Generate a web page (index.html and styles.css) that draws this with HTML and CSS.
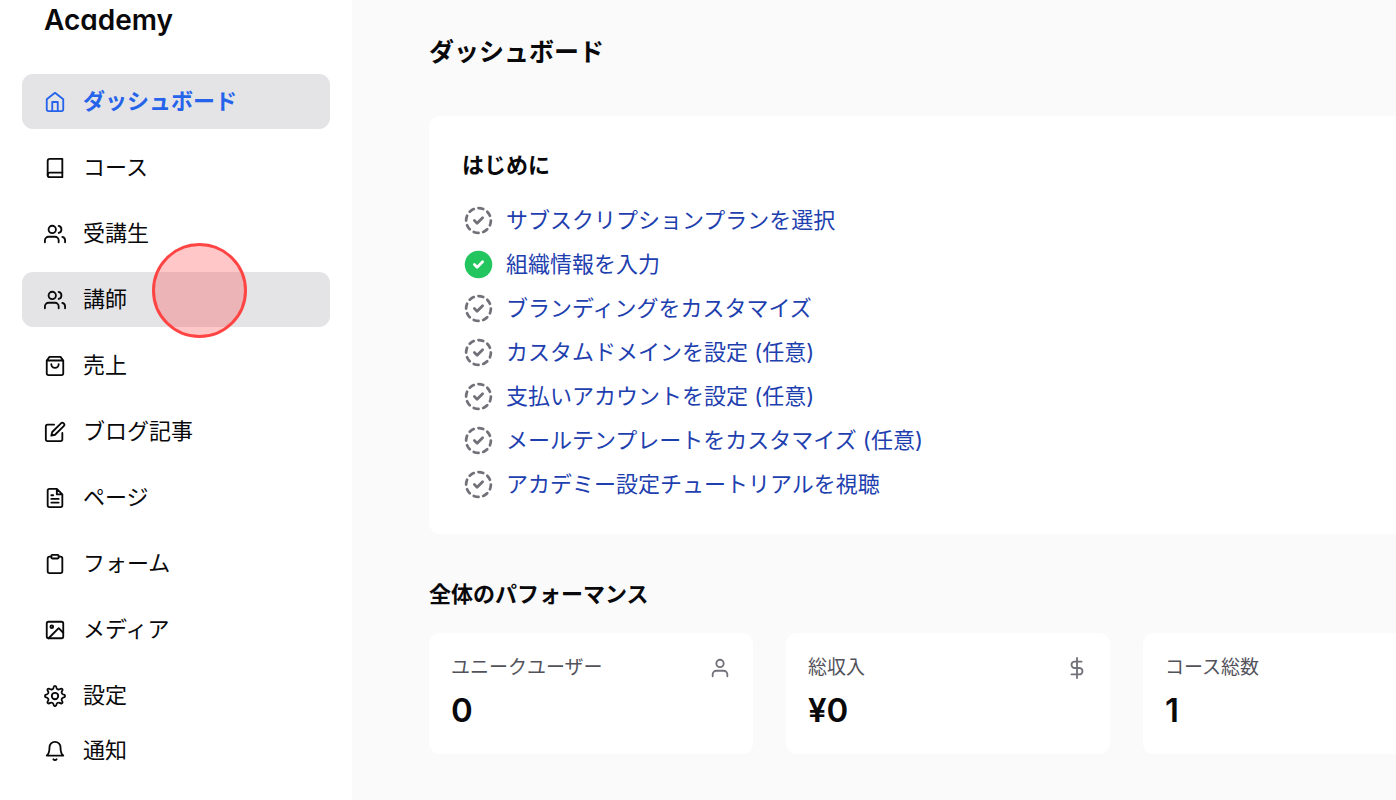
FILE: index.html
```html
<!DOCTYPE html>
<html lang="ja">
<head>
    <meta charset="UTF-8">
    <meta name="viewport" content="width=device-width, initial-scale=1.0">
    <title>ダッシュボード | Academy</title>
    <link rel="stylesheet" href="styles.css">
</head>
<body>
    <!-- shared icons -->
    <svg class="sprite" aria-hidden="true">
        <symbol id="icon-todo" viewBox="0 0 24 24">
            <path d="M8.56 3.69a9 9 0 0 0 -2.92 1.95M3.69 8.56a9 9 0 0 0 -.69 3.44M3.69 15.44a9 9 0 0 0 1.95 2.92M8.56 20.31a9 9 0 0 0 3.44 .69M15.44 20.31a9 9 0 0 0 2.92 -1.95M20.31 15.44a9 9 0 0 0 .69 -3.44M20.31 8.56a9 9 0 0 0 -1.95 -2.92M15.44 3.69a9 9 0 0 0 -3.44 -.69M9 12l2 2l4 -4"/>
        </symbol>
        <symbol id="icon-done" viewBox="0 0 24 24">
            <circle cx="12" cy="12" r="10" fill="#22c55e" stroke="none"/>
            <path d="M9 12l2 2l4 -4" stroke="#fff"/>
        </symbol>
        <symbol id="icon-users" viewBox="0 0 24 24">
            <path d="M16 21v-2a4 4 0 0 0-4-4H5a4 4 0 0 0-4 4v2M23 21v-2a4 4 0 0 0-3-3.87M16 3.13a4 4 0 0 1 0 7.75"/>
            <circle cx="9" cy="7" r="4"/>
        </symbol>
    </svg>

    <div class="layout">
        <aside class="sidebar">
            <div class="brand">Academy</div>
            <nav class="nav">
                <a class="nav-item active" href="#">
                    <svg class="icon" viewBox="0 0 24 24"><path d="M3 9l9-7 9 7v11a2 2 0 0 1-2 2H5a2 2 0 0 1-2-2z"/><path d="M9 22V12h6v10"/></svg>
                    ダッシュボード
                </a>
                <a class="nav-item" href="#">
                    <svg class="icon" viewBox="0 0 24 24"><path d="M4 19.5A2.5 2.5 0 0 1 6.500 17H20"/><path d="M6.500 2H20v20H6.500A2.500 2.500 0 0 1 4 19.500v-15A2.500 2.500 0 0 1 6.500 2z"/></svg>
                    コース
                </a>
                <a class="nav-item" href="#">
                    <svg class="icon"><use href="#icon-users"/></svg>
                    受講生
                </a>
                <a class="nav-item hovered" href="#">
                    <svg class="icon"><use href="#icon-users"/></svg>
                    講師
                    <span class="click-marker"></span>
                </a>
                <a class="nav-item" href="#">
                    <svg class="icon" viewBox="0 0 24 24"><path d="M6 2L3 6v14a2 2 0 0 0 2 2h14a2 2 0 0 0 2-2V6l-3-4zM3 6h18M16 10a4 4 0 0 1-8 0"/></svg>
                    売上
                </a>
                <a class="nav-item" href="#">
                    <svg class="icon" viewBox="0 0 24 24"><path d="M11 4H4a2 2 0 0 0-2 2v14a2 2 0 0 0 2 2h14a2 2 0 0 0 2-2v-7"/><path d="M18.5 2.5a2.121 2.121 0 0 1 3 3L12 15l-4 1 1-4z"/></svg>
                    ブログ記事
                </a>
                <a class="nav-item" href="#">
                    <svg class="icon" viewBox="0 0 24 24"><path d="M14 2H6a2 2 0 0 0-2 2v16a2 2 0 0 0 2 2h12a2 2 0 0 0 2-2V8zM14 2v6h6M16 13H8M16 17H8M10 9H8"/></svg>
                    ページ
                </a>
                <a class="nav-item" href="#">
                    <svg class="icon" viewBox="0 0 24 24"><path d="M16 4h2a2 2 0 0 1 2 2v14a2 2 0 0 1-2 2H6a2 2 0 0 1-2-2V6a2 2 0 0 1 2-2h2"/><rect x="8" y="2" width="8" height="4" rx="1"/></svg>
                    フォーム
                </a>
                <a class="nav-item" href="#">
                    <svg class="icon" viewBox="0 0 24 24"><rect x="3" y="3" width="18" height="18" rx="2"/><circle cx="8.5" cy="8.5" r="1.5"/><path d="M21 15l-5-5L5 21"/></svg>
                    メディア
                </a>
            </nav>
            <div class="nav-footer">
                <a class="nav-item" href="#">
                    <svg class="icon" viewBox="0 0 24 24"><circle cx="12" cy="12" r="3.5"/><path d="M10.3 3.2c.4-2.900 3-2.900 3.400 0a2.300 2.300 0 0 0 3.400 1.400c2.400-1.600 4.100.1 2.400 2.400a2.300 2.300 0 0 0 1.400 3.300c2.800.5 2.800 3 0 3.500a2.300 2.300 0 0 0-1.400 3.300c1.700 2.300 0 4-2.400 2.400a2.300 2.300 0 0 0-3.400 1.400c-.4 2.900-3 2.900-3.400 0a2.300 2.300 0 0 0-3.400-1.400c-2.400 1.600-4.100-.1-2.400-2.400a2.300 2.300 0 0 0-1.400-3.300c-2.800-.5-2.800-3 0-3.500A2.300 2.300 0 0 0 4.500 7c-1.700-2.300 0-4 2.400-2.400a2.300 2.300 0 0 0 3.400-1.400z"/></svg>
                    設定
                </a>
                <a class="nav-item" href="#">
                    <svg class="icon" viewBox="0 0 24 24"><path d="M18 8A6 6 0 0 0 6 8c0 7-3 9-3 9h18s-3-2-3-9M13.73 21a2 2 0 0 1-3.46 0"/></svg>
                    通知
                </a>
            </div>
        </aside>

        <main class="main">
            <div class="content">
                <h1 class="page-title">ダッシュボード</h1>

                <section class="card setup">
                    <h2 class="section-title">はじめに</h2>
                    <ul class="setup-list">
                        <li><svg class="step-icon"><use href="#icon-todo"/></svg><a href="#">サブスクリプションプランを選択</a></li>
                        <li><svg class="step-icon"><use href="#icon-done"/></svg><a href="#">組織情報を入力</a></li>
                        <li><svg class="step-icon"><use href="#icon-todo"/></svg><a href="#">ブランディングをカスタマイズ</a></li>
                        <li><svg class="step-icon"><use href="#icon-todo"/></svg><a href="#">カスタムドメインを設定 (任意)</a></li>
                        <li><svg class="step-icon"><use href="#icon-todo"/></svg><a href="#">支払いアカウントを設定 (任意)</a></li>
                        <li><svg class="step-icon"><use href="#icon-todo"/></svg><a href="#">メールテンプレートをカスタマイズ (任意)</a></li>
                        <li><svg class="step-icon"><use href="#icon-todo"/></svg><a href="#">アカデミー設定チュートリアルを視聴</a></li>
                    </ul>
                </section>

                <h2 class="section-title">全体のパフォーマンス</h2>
                <div class="stats">
                    <div class="card stat">
                        <div class="stat-head">
                            <span>ユニークユーザー</span>
                            <svg class="icon" viewBox="0 0 24 24"><path d="M20 21v-2a4 4 0 0 0-4-4H8a4 4 0 0 0-4 4v2"/><circle cx="12" cy="7" r="4"/></svg>
                        </div>
                        <div class="stat-value">0</div>
                    </div>
                    <div class="card stat">
                        <div class="stat-head">
                            <span>総収入</span>
                            <svg class="icon" viewBox="0 0 24 24"><path d="M12 1v22M17 5H9.5a3.5 3.5 0 0 0 0 7h5a3.5 3.5 0 0 1 0 7H6"/></svg>
                        </div>
                        <div class="stat-value">¥0</div>
                    </div>
                    <div class="card stat">
                        <div class="stat-head">
                            <span>コース総数</span>
                        </div>
                        <div class="stat-value">1</div>
                    </div>
                </div>
            </div>
        </main>
    </div>
</body>
</html>
```
FILE: styles.css
```css
* {
    box-sizing: border-box;
}
body {
    margin: 0;
    font-family: Inter, "Noto Sans CJK JP", sans-serif;
    font-feature-settings: "cv11";
    font-size: 22px;
    line-height: 33px;
    color: #09090b;
    background-color: #fafafa;
}
a {
    color: inherit;
    text-decoration: none;
}
svg {
    flex-shrink: 0;
    fill: none;
    stroke: currentColor;
    stroke-width: 2;
    stroke-linecap: round;
    stroke-linejoin: round;
}
.sprite {
    display: none;
}
.icon {
    width: 22px;
    height: 22px;
}
.layout {
    display: flex;
    min-height: 100vh;
    overflow: hidden;
}

/* sidebar */
.sidebar {
    flex: 0 0 352px;
    padding: 0 22px;
    background-color: #fff;
}
.brand {
    padding: 0 22px;
    margin-bottom: 33px;
    font-size: 28px;
    line-height: 41px;
    font-weight: 600;
}
.nav {
    display: flex;
    flex-direction: column;
    gap: 11px;
    margin-bottom: 11px;
}
.nav-item {
    position: relative;
    display: flex;
    align-items: center;
    gap: 17px;
    padding: 11px 22px;
    border-radius: 11px;
}
.nav-item.active {
    color: #2563eb;
    font-weight: 600;
    background-color: #e4e4e7;
}
.nav-item.hovered {
    background-color: #e4e4e7;
}
.click-marker {
    position: absolute;
    left: 130px;
    top: -29px;
    width: 95px;
    height: 95px;
    border: 3px solid #ff4444;
    border-radius: 50%;
    background-color: rgba(255, 68, 68, 0.3);
}

/* main */
.main {
    flex: 1;
    min-width: 0;
    padding: 33px 0 44px 77px;
}
.content {
    min-width: 1395px;
}
.page-title {
    margin: 0 0 45px;
    font-size: 25px;
    line-height: 38px;
    font-weight: 600;
}
.section-title {
    margin: 0 0 22px;
    font-size: 22px;
    line-height: 33px;
    font-weight: 600;
}
.card {
    background-color: #fff;
    border-radius: 11px;
}
.setup {
    padding: 33px;
    margin-bottom: 44px;
}
.setup-list {
    display: flex;
    flex-direction: column;
    gap: 11px;
    margin: 0;
    padding: 0;
    list-style: none;
}
.setup-list li {
    display: flex;
    align-items: center;
    gap: 11px;
    color: #1e40af;
}
.step-icon {
    width: 33px;
    height: 33px;
    color: #71717a;
}
.stats {
    display: grid;
    grid-template-columns: repeat(4, 1fr);
    gap: 33px;
}
.stat {
    padding: 22px;
}
.stat-head {
    display: flex;
    align-items: center;
    justify-content: space-between;
    margin-bottom: 7px;
    font-size: 19px;
    line-height: 26px;
    color: #52525b;
}
.stat-head .icon {
    color: #71717a;
}
.stat-value {
    font-size: 33px;
    line-height: 44px;
    font-weight: 600;
}
```
